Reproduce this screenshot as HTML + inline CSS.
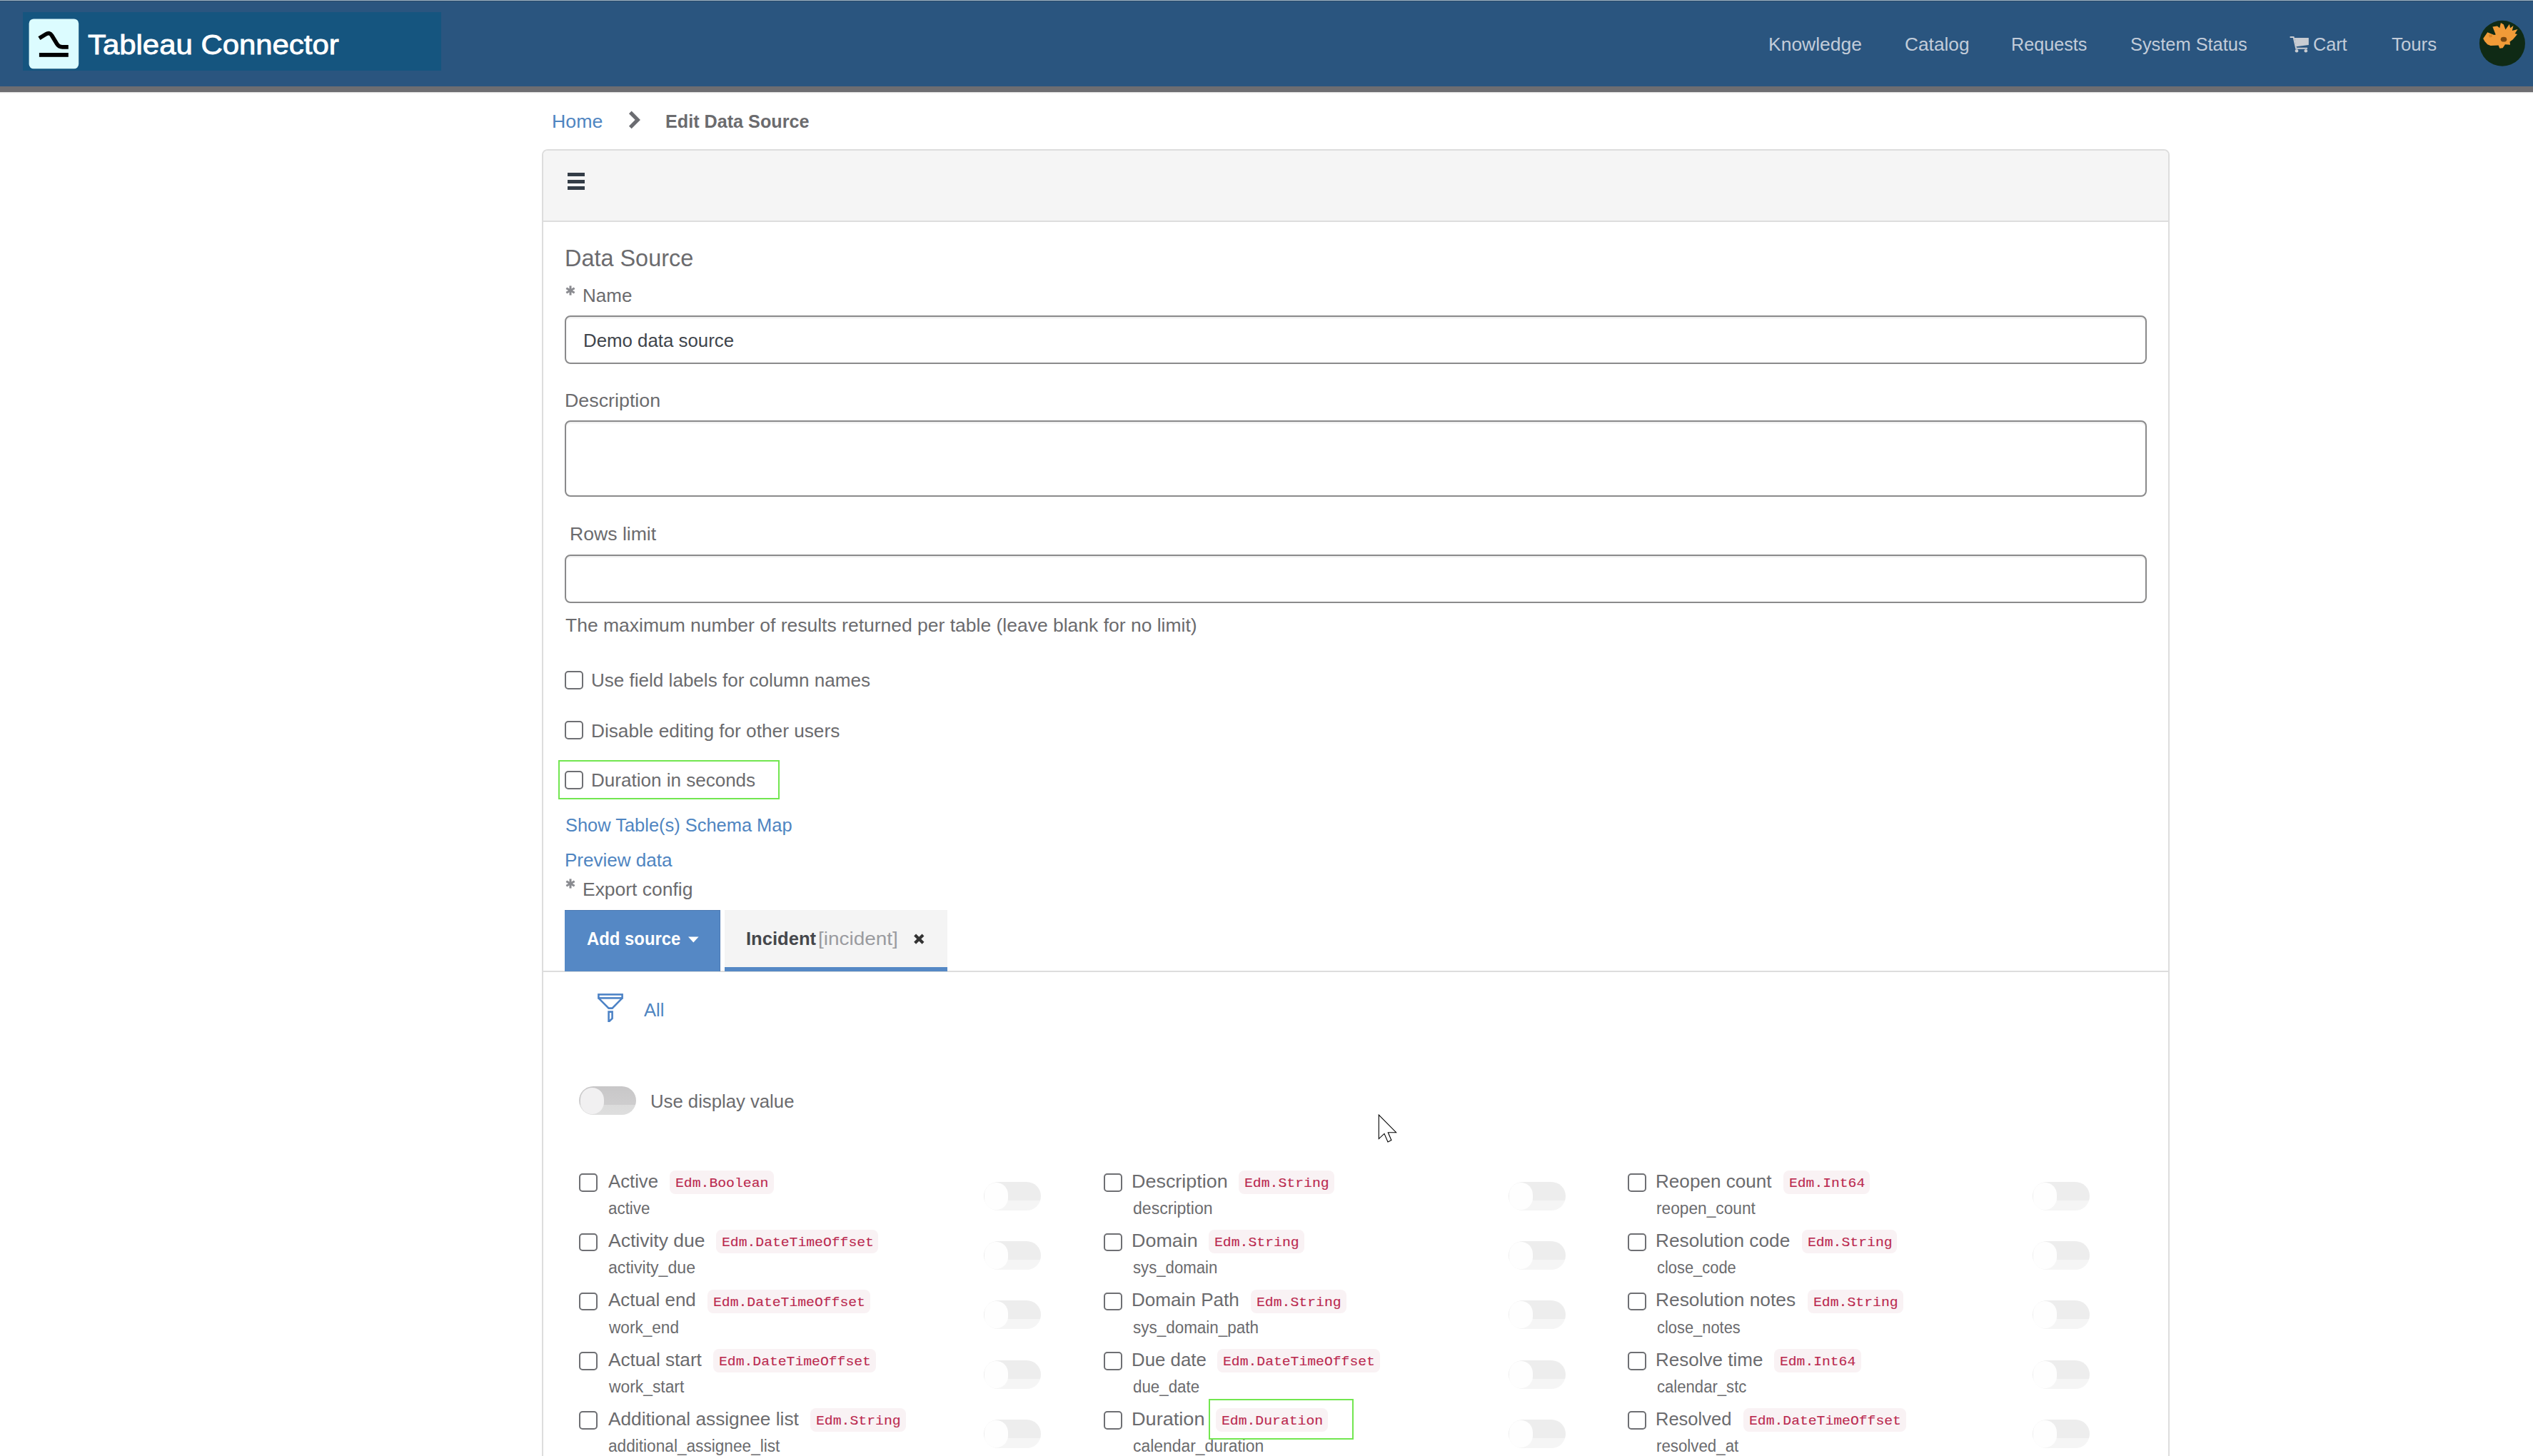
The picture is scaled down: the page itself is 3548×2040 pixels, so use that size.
<!DOCTYPE html>
<html><head><meta charset="utf-8"><title>Edit Data Source</title>
<style>
html,body{margin:0;padding:0;background:#fff;}
body{width:3548px;height:2040px;overflow:hidden;position:relative;font-family:"Liberation Sans",sans-serif;}
.b{position:absolute;display:block;}
.t{position:absolute;display:block;white-space:pre;line-height:1;transform-origin:0 0;}
</style></head><body>
<div class="b" style="left:0px;top:0px;width:3548px;height:121px;background:#2a557f;"></div>
<div class="b" style="left:0px;top:0px;width:3548px;height:1px;background:#9db3c5;"></div>
<div class="b" style="left:0px;top:1px;width:3548px;height:1px;background:#2b4a66;"></div>
<div class="b" style="left:0px;top:121px;width:3548px;height:8px;background:#6d6d71;"></div>
<div class="b" style="left:0px;top:129px;width:3548px;height:2px;background:linear-gradient(#d9d9d9,#ffffff);"></div>
<div class="b" style="left:32px;top:17px;width:586px;height:82px;background:#15557f;"></div>
<svg class="b" style="left:40px;top:26px" width="71" height="71" viewBox="40 26 71 71"><rect x="40.6" y="26.4" width="69.6" height="69.9" rx="6.5" fill="#dcfcff"/><path d="M54.9 53.6 L64.3 47.9 C68 45.6 70.6 46.4 72.6 49.7 L79.6 61.2 C81.6 64.6 83.6 65.8 87.5 65.8 L95.8 65.8" fill="none" stroke="#000" stroke-width="5.7"/><rect x="54.9" y="74" width="40.9" height="5.8" fill="#000"/></svg>
<span class="t" style="left:122.66px;top:44px;font-size:38.5px;color:#ffffff;font-weight:400;font-family:'Liberation Sans', sans-serif;transform:scaleX(1.0881);-webkit-text-stroke:0.85px #fff;">Tableau Connector</span>
<span class="t" style="left:2477.28px;top:49px;font-size:26.3px;color:#c2ccd9;font-weight:400;font-family:'Liberation Sans', sans-serif;transform:scaleX(1.0066);">Knowledge</span>
<span class="t" style="left:2667.69px;top:49px;font-size:26.3px;color:#c2ccd9;font-weight:400;font-family:'Liberation Sans', sans-serif;transform:scaleX(0.9991);">Catalog</span>
<span class="t" style="left:2816.99px;top:49px;font-size:26.3px;color:#c2ccd9;font-weight:400;font-family:'Liberation Sans', sans-serif;transform:scaleX(0.9575);">Requests</span>
<span class="t" style="left:2983.86px;top:49px;font-size:26.3px;color:#c2ccd9;font-weight:400;font-family:'Liberation Sans', sans-serif;transform:scaleX(0.9648);">System Status</span>
<span class="t" style="left:3240.14px;top:49px;font-size:26.3px;color:#c2ccd9;font-weight:400;font-family:'Liberation Sans', sans-serif;transform:scaleX(0.9578);">Cart</span>
<span class="t" style="left:3349.98px;top:49px;font-size:26.3px;color:#c2ccd9;font-weight:400;font-family:'Liberation Sans', sans-serif;transform:scaleX(0.9800);">Tours</span>
<svg class="b" style="left:3205px;top:48px" width="32" height="28" viewBox="3205 48 32 28"><path d="M3207.6 52 L3212.6 52 L3216.2 67.8 L3232 67.8" fill="none" stroke="#c8ccd2" stroke-width="2"/><path d="M3213.8 53 L3233.8 53 L3233.8 62.9 L3216.3 65.2 Z" fill="#c8ccd2"/><circle cx="3217" cy="71.3" r="2.3" fill="#c8ccd2"/><circle cx="3229.8" cy="71.3" r="2.3" fill="#c8ccd2"/></svg>
<svg class="b" style="left:3465px;top:20px" width="83" height="80" viewBox="0 0 1511 1456"><circle cx="727" cy="742" r="583" fill="#0f2a15"/><path d="M240 620 L350 460 L520 530 L560 520 L480 320 L600 300 L660 350 L690 220 L760 260 L810 390 L910 250 L930 350 L1010 290 L980 420 L1120 380 L1050 490 L1110 510 L1000 640 L920 700 L930 780 L800 770 L740 860 L660 870 L630 790 L430 800 L350 770 L280 690 Z" fill="#f19b38"/><ellipse cx="765" cy="640" rx="78" ry="62" fill="#7a4810"/><path d="M380 520 L470 520 L470 580 L400 590 Z" fill="#d98426"/></svg>
<span class="t" style="left:772.86px;top:157px;font-size:26.3px;color:#4f85c1;font-weight:400;font-family:'Liberation Sans', sans-serif;transform:scaleX(1.0164);">Home</span>
<svg class="b" style="left:878px;top:153px" width="22" height="30" viewBox="878 153 22 30"><path d="M882.8 157.3 L893.3 167.9 L882.8 178.5" fill="none" stroke="#6b6c71" stroke-width="5.2"/></svg>
<span class="t" style="left:931.96px;top:157px;font-size:26.3px;color:#6b6b6e;font-weight:700;font-family:'Liberation Sans', sans-serif;transform:scaleX(0.9573);">Edit Data Source</span>
<div class="b" style="left:759px;top:209px;width:2276px;height:1900px;border:2px solid #dddddd;border-radius:8px;background:#fff;"></div>
<div class="b" style="left:761px;top:211px;width:2276px;height:98px;background:#f5f5f5;border-bottom:2px solid #dddddd;border-radius:6px 6px 0 0;"></div>
<div class="b" style="left:795.4px;top:242.4px;width:23.600000000000023px;height:4.900000000000006px;background:#343d47;"></div>
<div class="b" style="left:795.4px;top:251.9px;width:23.600000000000023px;height:4.900000000000006px;background:#343d47;"></div>
<div class="b" style="left:795.4px;top:261.2px;width:23.600000000000023px;height:4.899999999999977px;background:#343d47;"></div>
<span class="t" style="left:791.41px;top:344px;font-size:34px;color:#6b6b6e;font-weight:400;font-family:'Liberation Sans', sans-serif;transform:scaleX(0.9535);">Data Source</span>
<svg class="b" style="left:791.8px;top:400.4px" width="14" height="14" viewBox="-7 -7 14 14"><g stroke="#8a8b90" stroke-width="3" stroke-linecap="butt"><path d="M0 -6.6 L0 6.6"/><path d="M-5.7 -3.3 L5.7 3.3"/><path d="M-5.7 3.3 L5.7 -3.3"/></g></svg>
<span class="t" style="left:815.92px;top:401px;font-size:26.3px;color:#6b6b6e;font-weight:400;font-family:'Liberation Sans', sans-serif;transform:scaleX(0.9895);">Name</span>
<div class="b" style="left:791px;top:442px;width:2216px;height:68px;border:2px solid #8a8a8b;border-radius:8px;background:#fff;box-sizing:border-box;box-shadow:inset 0 2px 2px rgba(0,0,0,0.07);"></div>
<span class="t" style="left:816.93px;top:464px;font-size:26.3px;color:#3f454c;font-weight:400;font-family:'Liberation Sans', sans-serif;transform:scaleX(0.9821);">Demo data source</span>
<span class="t" style="left:790.85px;top:548px;font-size:26.3px;color:#6b6b6e;font-weight:400;font-family:'Liberation Sans', sans-serif;transform:scaleX(1.0197);">Description</span>
<div class="b" style="left:791px;top:589px;width:2216px;height:107px;border:2px solid #8a8a8b;border-radius:8px;background:#fff;box-sizing:border-box;box-shadow:inset 0 2px 2px rgba(0,0,0,0.07);"></div>
<span class="t" style="left:797.87px;top:735px;font-size:26.3px;color:#6b6b6e;font-weight:400;font-family:'Liberation Sans', sans-serif;transform:scaleX(1.0114);">Rows limit</span>
<div class="b" style="left:791px;top:777px;width:2216px;height:68px;border:2px solid #8a8a8b;border-radius:8px;background:#fff;box-sizing:border-box;box-shadow:inset 0 2px 2px rgba(0,0,0,0.07);"></div>
<span class="t" style="left:792.47px;top:863px;font-size:26.3px;color:#6b6b6e;font-weight:400;font-family:'Liberation Sans', sans-serif;transform:scaleX(1.0071);">The maximum number of results returned per table (leave blank for no limit)</span>
<div class="b" style="left:791px;top:940.3px;width:26px;height:25.600000000000023px;border:2px solid #6e6f73;border-radius:5px;background:#fff;box-sizing:border-box;"></div>
<span class="t" style="left:827.65px;top:940px;font-size:26.3px;color:#6b6b6e;font-weight:400;font-family:'Liberation Sans', sans-serif;transform:scaleX(0.9907);">Use field labels for column names</span>
<div class="b" style="left:791px;top:1010.4px;width:26px;height:25.600000000000023px;border:2px solid #6e6f73;border-radius:5px;background:#fff;box-sizing:border-box;"></div>
<span class="t" style="left:827.50px;top:1011px;font-size:26.3px;color:#6b6b6e;font-weight:400;font-family:'Liberation Sans', sans-serif;transform:scaleX(0.9969);">Disable editing for other users</span>
<div class="b" style="left:791px;top:1080.3px;width:26px;height:25.59999999999991px;border:2px solid #6e6f73;border-radius:5px;background:#fff;box-sizing:border-box;"></div>
<span class="t" style="left:827.52px;top:1080px;font-size:26.3px;color:#6b6b6e;font-weight:400;font-family:'Liberation Sans', sans-serif;transform:scaleX(0.9901);">Duration in seconds</span>
<div class="b" style="left:782px;top:1065px;width:310px;height:55px;border:2px solid #72e650;box-sizing:border-box;"></div>
<span class="t" style="left:791.86px;top:1143px;font-size:26.3px;color:#4f85c1;font-weight:400;font-family:'Liberation Sans', sans-serif;transform:scaleX(0.9671);">Show Table(s) Schema Map</span>
<span class="t" style="left:790.92px;top:1192px;font-size:26.3px;color:#4f85c1;font-weight:400;font-family:'Liberation Sans', sans-serif;transform:scaleX(0.9899);">Preview data</span>
<svg class="b" style="left:791.8px;top:1231.3px" width="14" height="14" viewBox="-7 -7 14 14"><g stroke="#8a8b90" stroke-width="3" stroke-linecap="butt"><path d="M0 -6.6 L0 6.6"/><path d="M-5.7 -3.3 L5.7 3.3"/><path d="M-5.7 3.3 L5.7 -3.3"/></g></svg>
<span class="t" style="left:815.88px;top:1233px;font-size:26.3px;color:#6b6b6e;font-weight:400;font-family:'Liberation Sans', sans-serif;transform:scaleX(1.0057);">Export config</span>
<div class="b" style="left:761px;top:1360px;width:2276px;height:2px;background:#dddddd;"></div>
<div class="b" style="left:791px;top:1275px;width:218px;height:86px;background:#5588c5;box-shadow:inset -1px 1px 0 0 #4c7ab3;"></div>
<span class="t" style="left:821.90px;top:1302px;font-size:26.3px;color:#ffffff;font-weight:700;font-family:'Liberation Sans', sans-serif;transform:scaleX(0.9079);">Add source</span>
<svg class="b" style="left:963px;top:1312px" width="17" height="10" viewBox="963 1312 17 10"><path d="M964 1312.6 L978.6 1312.6 L971.3 1320.6 Z" fill="#fff"/></svg>
<div class="b" style="left:1015px;top:1275px;width:312px;height:86px;background:#f4f4f4;"></div>
<div class="b" style="left:1015px;top:1355px;width:312px;height:6px;background:#5588c5;"></div>
<span class="t" style="left:1045.34px;top:1302px;font-size:26.3px;color:#45474b;font-weight:700;font-family:'Liberation Sans', sans-serif;transform:scaleX(0.9731);">Incident</span>
<span class="t" style="left:1145.75px;top:1302px;font-size:26.3px;color:#9a9b9f;font-weight:400;font-family:'Liberation Sans', sans-serif;transform:scaleX(1.0619);">[incident]</span>
<svg class="b" style="left:1278px;top:1306px" width="19" height="19" viewBox="1278 1306 19 19"><path d="M1281.6 1310 L1293 1321.2 M1293 1310 L1281.6 1321.2" stroke="#333" stroke-width="4.2" fill="none"/></svg>
<svg class="b" style="left:835px;top:1390px" width="40" height="44" viewBox="835 1390 40 44"><g fill="none" stroke="#4d83c6" stroke-width="2.6" stroke-linejoin="miter"><rect x="838.4" y="1393.4" width="33.2" height="5"/><path d="M838.6 1398.6 L852.6 1412.6 L857.6 1412.6 L871.4 1398.6"/><path d="M852.6 1417.6 L857.6 1417.6 L857.6 1427 L853.6 1430.8 L852.6 1430.8 Z"/></g></svg>
<span class="t" style="left:902.40px;top:1402px;font-size:26.3px;color:#4f85c1;font-weight:400;font-family:'Liberation Sans', sans-serif;transform:scaleX(0.9715);">All</span>
<div class="b" style="left:811px;top:1522px;width:80px;height:40px;border-radius:20px;background:linear-gradient(#c8c7c8 0%,#cecdce 64%,#dbdbdb 64%,#dedede 100%);"></div>
<div class="b" style="left:812.5px;top:1523.5px;width:33px;height:37px;border-radius:18px;background:#f1f0f1;"></div>
<span class="t" style="left:911.27px;top:1530px;font-size:26.3px;color:#6b6b6e;font-weight:400;font-family:'Liberation Sans', sans-serif;transform:scaleX(0.9773);">Use display value</span>
<div class="b" style="left:811px;top:1644.4px;width:26px;height:25.40000000000009px;border:2px solid #6e6f73;border-radius:5px;background:#fff;box-sizing:border-box;"></div>
<span class="t" style="left:852.10px;top:1643px;font-size:25.8px;color:#6b6b6e;font-weight:400;font-family:'Liberation Sans', sans-serif;transform:scaleX(0.9969);">Active</span>
<div class="b" style="left:938.3px;top:1640.1000000000001px;width:145.24px;height:32.899999999999864px;background:#f9f2f4;border-radius:8px;"></div>
<span class="t" style="left:946.12px;top:1650px;font-size:17.9px;color:#bb2a50;font-weight:400;font-family:'Liberation Mono', monospace;transform:scaleX(1.1038);-webkit-text-stroke:0.12px #bb2a50;">Edm.Boolean</span>
<span class="t" style="left:851.70px;top:1682px;font-size:23px;color:#6b6b6e;font-weight:400;font-family:'Liberation Sans', sans-serif;transform:scaleX(0.9729);">active</span>
<div class="b" style="left:1378.2px;top:1655.8000000000002px;width:80px;height:40px;border-radius:20px;background:linear-gradient(#ededed 0%,#ededed 66%,#f5f5f5 66%,#f5f5f5 100%);"></div>
<div class="b" style="left:1379.2px;top:1656.8000000000002px;width:33px;height:38px;border-radius:18px;background:#fefefe;"></div>
<div class="b" style="left:811px;top:1727.6px;width:26px;height:25.40000000000009px;border:2px solid #6e6f73;border-radius:5px;background:#fff;box-sizing:border-box;"></div>
<span class="t" style="left:852.10px;top:1726px;font-size:25.8px;color:#6b6b6e;font-weight:400;font-family:'Liberation Sans', sans-serif;transform:scaleX(1.0277);">Activity due</span>
<div class="b" style="left:1003px;top:1723.3px;width:227.42000000000007px;height:32.899999999999864px;background:#f9f2f4;border-radius:8px;"></div>
<span class="t" style="left:1010.82px;top:1733px;font-size:17.9px;color:#bb2a50;font-weight:400;font-family:'Liberation Mono', monospace;transform:scaleX(1.1016);-webkit-text-stroke:0.12px #bb2a50;">Edm.DateTimeOffset</span>
<span class="t" style="left:851.68px;top:1765px;font-size:23px;color:#6b6b6e;font-weight:400;font-family:'Liberation Sans', sans-serif;transform:scaleX(1.0043);">activity_due</span>
<div class="b" style="left:1378.2px;top:1739.0px;width:80px;height:40px;border-radius:20px;background:linear-gradient(#ededed 0%,#ededed 66%,#f5f5f5 66%,#f5f5f5 100%);"></div>
<div class="b" style="left:1379.2px;top:1740.0px;width:33px;height:38px;border-radius:18px;background:#fefefe;"></div>
<div class="b" style="left:811px;top:1811.0px;width:26px;height:25.40000000000009px;border:2px solid #6e6f73;border-radius:5px;background:#fff;box-sizing:border-box;"></div>
<span class="t" style="left:852.10px;top:1809px;font-size:25.8px;color:#6b6b6e;font-weight:400;font-family:'Liberation Sans', sans-serif;transform:scaleX(1.0073);">Actual end</span>
<div class="b" style="left:991.4px;top:1806.7px;width:227.41999999999996px;height:32.899999999999864px;background:#f9f2f4;border-radius:8px;"></div>
<span class="t" style="left:999.22px;top:1817px;font-size:17.9px;color:#bb2a50;font-weight:400;font-family:'Liberation Mono', monospace;transform:scaleX(1.1016);-webkit-text-stroke:0.12px #bb2a50;">Edm.DateTimeOffset</span>
<span class="t" style="left:852.60px;top:1849px;font-size:23px;color:#6b6b6e;font-weight:400;font-family:'Liberation Sans', sans-serif;transform:scaleX(0.9826);">work_end</span>
<div class="b" style="left:1378.2px;top:1822.4px;width:80px;height:40px;border-radius:20px;background:linear-gradient(#ededed 0%,#ededed 66%,#f5f5f5 66%,#f5f5f5 100%);"></div>
<div class="b" style="left:1379.2px;top:1823.4px;width:33px;height:38px;border-radius:18px;background:#fefefe;"></div>
<div class="b" style="left:811px;top:1894.2px;width:26px;height:25.40000000000009px;border:2px solid #6e6f73;border-radius:5px;background:#fff;box-sizing:border-box;"></div>
<span class="t" style="left:852.10px;top:1893px;font-size:25.8px;color:#6b6b6e;font-weight:400;font-family:'Liberation Sans', sans-serif;transform:scaleX(1.0142);">Actual start</span>
<div class="b" style="left:999.2px;top:1889.9px;width:227.42000000000007px;height:32.899999999999864px;background:#f9f2f4;border-radius:8px;"></div>
<span class="t" style="left:1007.02px;top:1900px;font-size:17.9px;color:#bb2a50;font-weight:400;font-family:'Liberation Mono', monospace;transform:scaleX(1.1016);-webkit-text-stroke:0.12px #bb2a50;">Edm.DateTimeOffset</span>
<span class="t" style="left:852.60px;top:1932px;font-size:23px;color:#6b6b6e;font-weight:400;font-family:'Liberation Sans', sans-serif;transform:scaleX(0.9923);">work_start</span>
<div class="b" style="left:1378.2px;top:1905.6000000000001px;width:80px;height:40px;border-radius:20px;background:linear-gradient(#ededed 0%,#ededed 66%,#f5f5f5 66%,#f5f5f5 100%);"></div>
<div class="b" style="left:1379.2px;top:1906.6000000000001px;width:33px;height:38px;border-radius:18px;background:#fefefe;"></div>
<div class="b" style="left:811px;top:1977.4px;width:26px;height:25.40000000000009px;border:2px solid #6e6f73;border-radius:5px;background:#fff;box-sizing:border-box;"></div>
<span class="t" style="left:852.10px;top:1976px;font-size:25.8px;color:#6b6b6e;font-weight:400;font-family:'Liberation Sans', sans-serif;transform:scaleX(1.0166);">Additional assignee list</span>
<div class="b" style="left:1135.4px;top:1973.1000000000001px;width:133.5px;height:32.899999999999864px;background:#f9f2f4;border-radius:8px;"></div>
<span class="t" style="left:1143.22px;top:1983px;font-size:17.9px;color:#bb2a50;font-weight:400;font-family:'Liberation Mono', monospace;transform:scaleX(1.1049);-webkit-text-stroke:0.12px #bb2a50;">Edm.String</span>
<span class="t" style="left:851.69px;top:2015px;font-size:23px;color:#6b6b6e;font-weight:400;font-family:'Liberation Sans', sans-serif;transform:scaleX(0.9843);">additional_assignee_list</span>
<div class="b" style="left:1378.2px;top:1988.8000000000002px;width:80px;height:40px;border-radius:20px;background:linear-gradient(#ededed 0%,#ededed 66%,#f5f5f5 66%,#f5f5f5 100%);"></div>
<div class="b" style="left:1379.2px;top:1989.8000000000002px;width:33px;height:38px;border-radius:18px;background:#fefefe;"></div>
<div class="b" style="left:1546px;top:1644.4px;width:26px;height:25.40000000000009px;border:2px solid #6e6f73;border-radius:5px;background:#fff;box-sizing:border-box;"></div>
<span class="t" style="left:1584.94px;top:1643px;font-size:25.8px;color:#6b6b6e;font-weight:400;font-family:'Liberation Sans', sans-serif;transform:scaleX(1.0442);">Description</span>
<div class="b" style="left:1735.3px;top:1640.1000000000001px;width:133.5px;height:32.899999999999864px;background:#f9f2f4;border-radius:8px;"></div>
<span class="t" style="left:1743.12px;top:1650px;font-size:17.9px;color:#bb2a50;font-weight:400;font-family:'Liberation Mono', monospace;transform:scaleX(1.1049);-webkit-text-stroke:0.12px #bb2a50;">Edm.String</span>
<span class="t" style="left:1586.68px;top:1682px;font-size:23px;color:#6b6b6e;font-weight:400;font-family:'Liberation Sans', sans-serif;transform:scaleX(1.0028);">description</span>
<div class="b" style="left:2113.2px;top:1655.8000000000002px;width:80px;height:40px;border-radius:20px;background:linear-gradient(#ededed 0%,#ededed 66%,#f5f5f5 66%,#f5f5f5 100%);"></div>
<div class="b" style="left:2114.2px;top:1656.8000000000002px;width:33px;height:38px;border-radius:18px;background:#fefefe;"></div>
<div class="b" style="left:1546px;top:1727.6px;width:26px;height:25.40000000000009px;border:2px solid #6e6f73;border-radius:5px;background:#fff;box-sizing:border-box;"></div>
<span class="t" style="left:1584.95px;top:1726px;font-size:25.8px;color:#6b6b6e;font-weight:400;font-family:'Liberation Sans', sans-serif;transform:scaleX(1.0430);">Domain</span>
<div class="b" style="left:1693px;top:1723.3px;width:133.5px;height:32.899999999999864px;background:#f9f2f4;border-radius:8px;"></div>
<span class="t" style="left:1700.82px;top:1733px;font-size:17.9px;color:#bb2a50;font-weight:400;font-family:'Liberation Mono', monospace;transform:scaleX(1.1049);-webkit-text-stroke:0.12px #bb2a50;">Edm.String</span>
<span class="t" style="left:1586.93px;top:1765px;font-size:23px;color:#6b6b6e;font-weight:400;font-family:'Liberation Sans', sans-serif;transform:scaleX(0.9642);">sys_domain</span>
<div class="b" style="left:2113.2px;top:1739.0px;width:80px;height:40px;border-radius:20px;background:linear-gradient(#ededed 0%,#ededed 66%,#f5f5f5 66%,#f5f5f5 100%);"></div>
<div class="b" style="left:2114.2px;top:1740.0px;width:33px;height:38px;border-radius:18px;background:#fefefe;"></div>
<div class="b" style="left:1546px;top:1811.0px;width:26px;height:25.40000000000009px;border:2px solid #6e6f73;border-radius:5px;background:#fff;box-sizing:border-box;"></div>
<span class="t" style="left:1585.01px;top:1809px;font-size:25.8px;color:#6b6b6e;font-weight:400;font-family:'Liberation Sans', sans-serif;transform:scaleX(1.0118);">Domain Path</span>
<div class="b" style="left:1752.1px;top:1806.7px;width:133.5px;height:32.899999999999864px;background:#f9f2f4;border-radius:8px;"></div>
<span class="t" style="left:1759.92px;top:1817px;font-size:17.9px;color:#bb2a50;font-weight:400;font-family:'Liberation Mono', monospace;transform:scaleX(1.1049);-webkit-text-stroke:0.12px #bb2a50;">Edm.String</span>
<span class="t" style="left:1586.93px;top:1849px;font-size:23px;color:#6b6b6e;font-weight:400;font-family:'Liberation Sans', sans-serif;transform:scaleX(0.9763);">sys_domain_path</span>
<div class="b" style="left:2113.2px;top:1822.4px;width:80px;height:40px;border-radius:20px;background:linear-gradient(#ededed 0%,#ededed 66%,#f5f5f5 66%,#f5f5f5 100%);"></div>
<div class="b" style="left:2114.2px;top:1823.4px;width:33px;height:38px;border-radius:18px;background:#fefefe;"></div>
<div class="b" style="left:1546px;top:1894.2px;width:26px;height:25.40000000000009px;border:2px solid #6e6f73;border-radius:5px;background:#fff;box-sizing:border-box;"></div>
<span class="t" style="left:1585.03px;top:1893px;font-size:25.8px;color:#6b6b6e;font-weight:400;font-family:'Liberation Sans', sans-serif;transform:scaleX(1.0008);">Due date</span>
<div class="b" style="left:1705.2px;top:1889.9px;width:227.42000000000007px;height:32.899999999999864px;background:#f9f2f4;border-radius:8px;"></div>
<span class="t" style="left:1713.02px;top:1900px;font-size:17.9px;color:#bb2a50;font-weight:400;font-family:'Liberation Mono', monospace;transform:scaleX(1.1016);-webkit-text-stroke:0.12px #bb2a50;">Edm.DateTimeOffset</span>
<span class="t" style="left:1586.71px;top:1932px;font-size:23px;color:#6b6b6e;font-weight:400;font-family:'Liberation Sans', sans-serif;transform:scaleX(0.9707);">due_date</span>
<div class="b" style="left:2113.2px;top:1905.6000000000001px;width:80px;height:40px;border-radius:20px;background:linear-gradient(#ededed 0%,#ededed 66%,#f5f5f5 66%,#f5f5f5 100%);"></div>
<div class="b" style="left:2114.2px;top:1906.6000000000001px;width:33px;height:38px;border-radius:18px;background:#fefefe;"></div>
<div class="b" style="left:1546px;top:1977.4px;width:26px;height:25.40000000000009px;border:2px solid #6e6f73;border-radius:5px;background:#fff;box-sizing:border-box;"></div>
<span class="t" style="left:1584.93px;top:1976px;font-size:25.8px;color:#6b6b6e;font-weight:400;font-family:'Liberation Sans', sans-serif;transform:scaleX(1.0514);">Duration</span>
<div class="b" style="left:1703.4px;top:1973.1000000000001px;width:156.98000000000002px;height:32.899999999999864px;background:#f9f2f4;border-radius:8px;"></div>
<span class="t" style="left:1711.22px;top:1983px;font-size:17.9px;color:#bb2a50;font-weight:400;font-family:'Liberation Mono', monospace;transform:scaleX(1.1029);-webkit-text-stroke:0.12px #bb2a50;">Edm.Duration</span>
<span class="t" style="left:1586.68px;top:2015px;font-size:23px;color:#6b6b6e;font-weight:400;font-family:'Liberation Sans', sans-serif;transform:scaleX(0.9956);">calendar_duration</span>
<div class="b" style="left:2113.2px;top:1988.8000000000002px;width:80px;height:40px;border-radius:20px;background:linear-gradient(#ededed 0%,#ededed 66%,#f5f5f5 66%,#f5f5f5 100%);"></div>
<div class="b" style="left:2114.2px;top:1989.8000000000002px;width:33px;height:38px;border-radius:18px;background:#fefefe;"></div>
<div class="b" style="left:2280px;top:1644.4px;width:26px;height:25.40000000000009px;border:2px solid #6e6f73;border-radius:5px;background:#fff;box-sizing:border-box;"></div>
<span class="t" style="left:2319.01px;top:1643px;font-size:25.8px;color:#6b6b6e;font-weight:400;font-family:'Liberation Sans', sans-serif;transform:scaleX(1.0119);">Reopen count</span>
<div class="b" style="left:2497.7px;top:1640.1000000000001px;width:121.76000000000022px;height:32.899999999999864px;background:#f9f2f4;border-radius:8px;"></div>
<span class="t" style="left:2505.53px;top:1650px;font-size:17.9px;color:#bb2a50;font-weight:400;font-family:'Liberation Mono', monospace;transform:scaleX(1.0989);-webkit-text-stroke:0.12px #bb2a50;">Edm.Int64</span>
<span class="t" style="left:2320.12px;top:1682px;font-size:23px;color:#6b6b6e;font-weight:400;font-family:'Liberation Sans', sans-serif;transform:scaleX(0.9868);">reopen_count</span>
<div class="b" style="left:2847.2px;top:1655.8000000000002px;width:80px;height:40px;border-radius:20px;background:linear-gradient(#ededed 0%,#ededed 66%,#f5f5f5 66%,#f5f5f5 100%);"></div>
<div class="b" style="left:2848.2px;top:1656.8000000000002px;width:33px;height:38px;border-radius:18px;background:#fefefe;"></div>
<div class="b" style="left:2280px;top:1727.6px;width:26px;height:25.40000000000009px;border:2px solid #6e6f73;border-radius:5px;background:#fff;box-sizing:border-box;"></div>
<span class="t" style="left:2319.00px;top:1726px;font-size:25.8px;color:#6b6b6e;font-weight:400;font-family:'Liberation Sans', sans-serif;transform:scaleX(1.0178);">Resolution code</span>
<div class="b" style="left:2523.7px;top:1723.3px;width:133.5px;height:32.899999999999864px;background:#f9f2f4;border-radius:8px;"></div>
<span class="t" style="left:2531.52px;top:1733px;font-size:17.9px;color:#bb2a50;font-weight:400;font-family:'Liberation Mono', monospace;transform:scaleX(1.1049);-webkit-text-stroke:0.12px #bb2a50;">Edm.String</span>
<span class="t" style="left:2320.72px;top:1765px;font-size:23px;color:#6b6b6e;font-weight:400;font-family:'Liberation Sans', sans-serif;transform:scaleX(0.9517);">close_code</span>
<div class="b" style="left:2847.2px;top:1739.0px;width:80px;height:40px;border-radius:20px;background:linear-gradient(#ededed 0%,#ededed 66%,#f5f5f5 66%,#f5f5f5 100%);"></div>
<div class="b" style="left:2848.2px;top:1740.0px;width:33px;height:38px;border-radius:18px;background:#fefefe;"></div>
<div class="b" style="left:2280px;top:1811.0px;width:26px;height:25.40000000000009px;border:2px solid #6e6f73;border-radius:5px;background:#fff;box-sizing:border-box;"></div>
<span class="t" style="left:2318.99px;top:1809px;font-size:25.8px;color:#6b6b6e;font-weight:400;font-family:'Liberation Sans', sans-serif;transform:scaleX(1.0204);">Resolution notes</span>
<div class="b" style="left:2532.3px;top:1806.7px;width:133.5px;height:32.899999999999864px;background:#f9f2f4;border-radius:8px;"></div>
<span class="t" style="left:2540.12px;top:1817px;font-size:17.9px;color:#bb2a50;font-weight:400;font-family:'Liberation Mono', monospace;transform:scaleX(1.1049);-webkit-text-stroke:0.12px #bb2a50;">Edm.String</span>
<span class="t" style="left:2320.72px;top:1849px;font-size:23px;color:#6b6b6e;font-weight:400;font-family:'Liberation Sans', sans-serif;transform:scaleX(0.9514);">close_notes</span>
<div class="b" style="left:2847.2px;top:1822.4px;width:80px;height:40px;border-radius:20px;background:linear-gradient(#ededed 0%,#ededed 66%,#f5f5f5 66%,#f5f5f5 100%);"></div>
<div class="b" style="left:2848.2px;top:1823.4px;width:33px;height:38px;border-radius:18px;background:#fefefe;"></div>
<div class="b" style="left:2280px;top:1894.2px;width:26px;height:25.40000000000009px;border:2px solid #6e6f73;border-radius:5px;background:#fff;box-sizing:border-box;"></div>
<span class="t" style="left:2319.02px;top:1893px;font-size:25.8px;color:#6b6b6e;font-weight:400;font-family:'Liberation Sans', sans-serif;transform:scaleX(1.0089);">Resolve time</span>
<div class="b" style="left:2485.4px;top:1889.9px;width:121.75999999999976px;height:32.899999999999864px;background:#f9f2f4;border-radius:8px;"></div>
<span class="t" style="left:2493.23px;top:1900px;font-size:17.9px;color:#bb2a50;font-weight:400;font-family:'Liberation Mono', monospace;transform:scaleX(1.0989);-webkit-text-stroke:0.12px #bb2a50;">Edm.Int64</span>
<span class="t" style="left:2320.72px;top:1932px;font-size:23px;color:#6b6b6e;font-weight:400;font-family:'Liberation Sans', sans-serif;transform:scaleX(0.9611);">calendar_stc</span>
<div class="b" style="left:2847.2px;top:1905.6000000000001px;width:80px;height:40px;border-radius:20px;background:linear-gradient(#ededed 0%,#ededed 66%,#f5f5f5 66%,#f5f5f5 100%);"></div>
<div class="b" style="left:2848.2px;top:1906.6000000000001px;width:33px;height:38px;border-radius:18px;background:#fefefe;"></div>
<div class="b" style="left:2280px;top:1977.4px;width:26px;height:25.40000000000009px;border:2px solid #6e6f73;border-radius:5px;background:#fff;box-sizing:border-box;"></div>
<span class="t" style="left:2319.06px;top:1976px;font-size:25.8px;color:#6b6b6e;font-weight:400;font-family:'Liberation Sans', sans-serif;transform:scaleX(0.9890);">Resolved</span>
<div class="b" style="left:2442.4px;top:1973.1000000000001px;width:227.42000000000007px;height:32.899999999999864px;background:#f9f2f4;border-radius:8px;"></div>
<span class="t" style="left:2450.22px;top:1983px;font-size:17.9px;color:#bb2a50;font-weight:400;font-family:'Liberation Mono', monospace;transform:scaleX(1.1016);-webkit-text-stroke:0.12px #bb2a50;">Edm.DateTimeOffset</span>
<span class="t" style="left:2320.15px;top:2015px;font-size:23px;color:#6b6b6e;font-weight:400;font-family:'Liberation Sans', sans-serif;transform:scaleX(0.9694);">resolved_at</span>
<div class="b" style="left:2847.2px;top:1988.8000000000002px;width:80px;height:40px;border-radius:20px;background:linear-gradient(#ededed 0%,#ededed 66%,#f5f5f5 66%,#f5f5f5 100%);"></div>
<div class="b" style="left:2848.2px;top:1989.8000000000002px;width:33px;height:38px;border-radius:18px;background:#fefefe;"></div>
<div class="b" style="left:1693.3px;top:1960.4px;width:202.70000000000005px;height:56.19999999999982px;border:2px solid #72e650;box-sizing:border-box;"></div>
<svg class="b" style="left:1925px;top:1556px" width="40" height="50" viewBox="1925 1556 40 50"><path d="M1931.3 1562.2 L1931.3 1595.6 L1939 1588.4 L1944 1600 L1948.9 1597.5 L1944.3 1586.7 L1955.6 1586.7 Z" fill="#fff" stroke="#000" stroke-width="1.1"/></svg>
</body></html>
